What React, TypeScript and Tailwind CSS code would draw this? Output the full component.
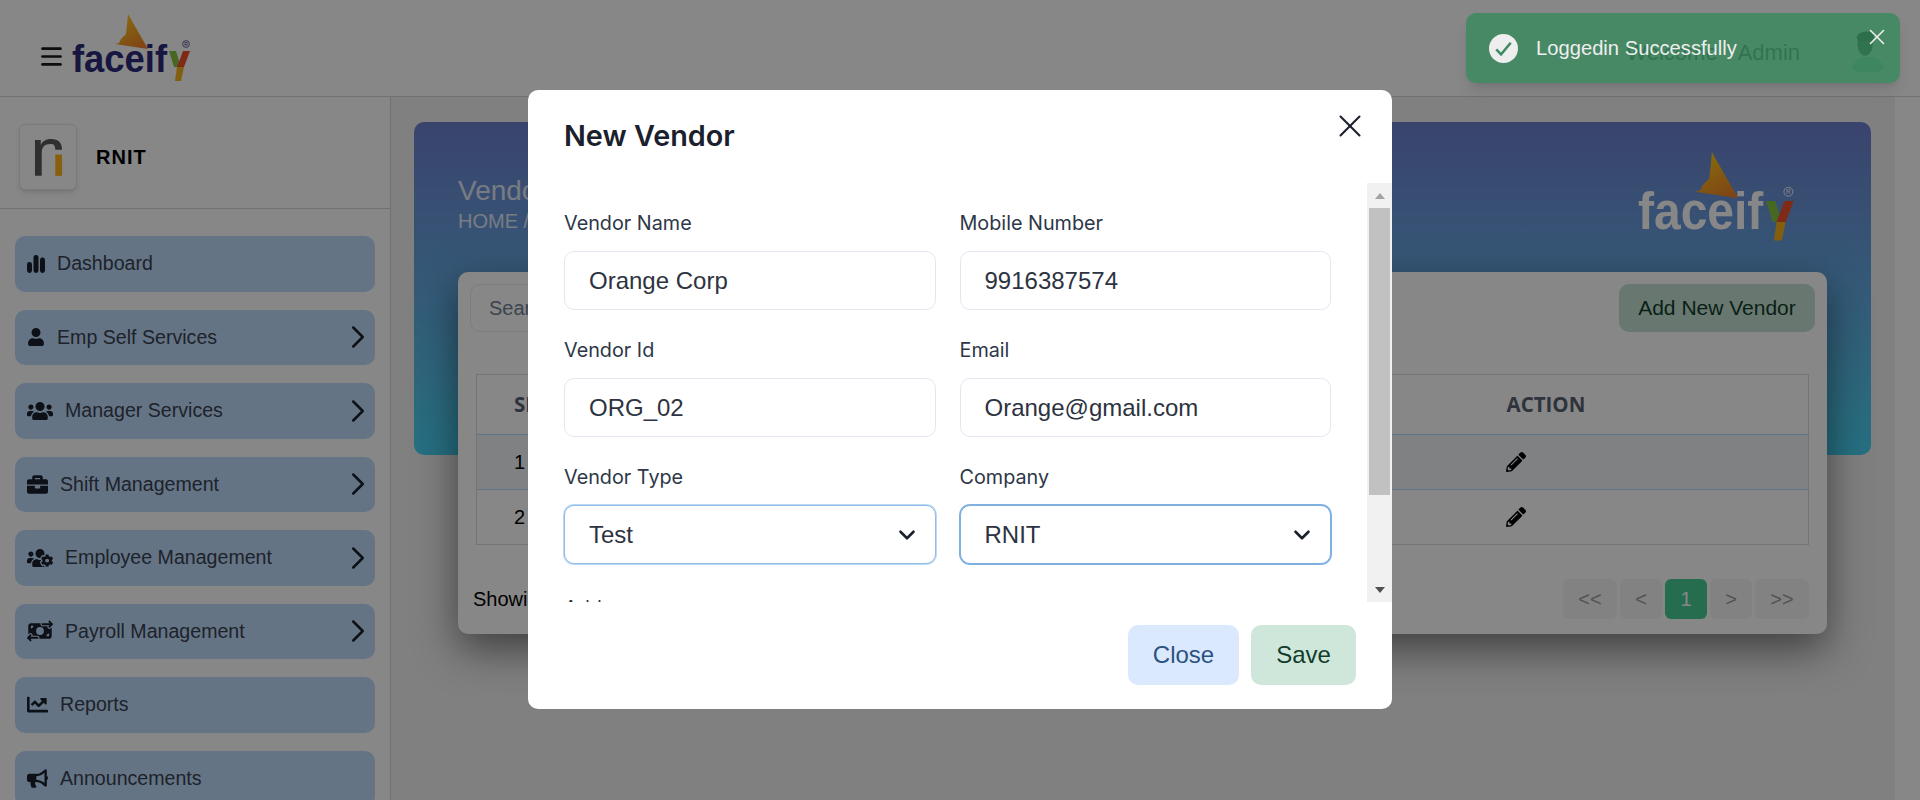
import React from "react";
import { ChevronDown, ChevronRight, Menu, X } from "lucide-react";
import {
  FaBriefcase,
  FaBullhorn,
  FaChartLine,
  FaPencilAlt,
  FaUser,
  FaUsers,
  FaUsersCog,
} from "react-icons/fa";
import { FaMoneyBillTransfer } from "react-icons/fa6";

const sans = "font-['Liberation_Sans',Arial,sans-serif]";
const inter = "font-['Inter',sans-serif]";

const BarsIcon = () => (
  <svg viewBox="0 0 18 18" className="w-[18px] h-[18px]" fill="currentColor">
    <rect x="0" y="7" width="5" height="11" rx="2.4" />
    <rect x="6.5" y="0" width="5" height="18" rx="2.4" />
    <rect x="13" y="2.5" width="5" height="15.5" rx="2.4" />
  </svg>
);

const Logo = ({ className, textColor }: { className: string; textColor: string }) => (
  <svg viewBox="0 0 119 68" className={className}>
    <defs>
      <linearGradient id="flag" x1="0.3" y1="0" x2="0.8" y2="1">
        <stop offset="0" stopColor="#ffcc1a" />
        <stop offset="1" stopColor="#f0802a" />
      </linearGradient>
    </defs>
    <polygon points="56,0 76,35 43,30 47,29 49,25 54,20 55,11" fill="url(#flag)" />
    <text
      x="0"
      y="58"
      fontFamily="Liberation Sans, Arial, sans-serif"
      fontWeight="700"
      fontSize="39"
      textLength="95"
      lengthAdjust="spacingAndGlyphs"
      fill={textColor}
    >
      faceif
    </text>
    <polygon points="97,37 104,37 109,53 102,53" fill="#86c440" />
    <polygon points="111,37 118,37 112,53 105,53" fill="#f0502a" />
    <polygon points="105,53 112,53 109,67 103,67" fill="#f7b21c" />
    <circle cx="114" cy="30" r="3.4" fill="none" stroke={textColor} strokeWidth="0.7" />
    <text x="114" y="32" fontSize="5" textAnchor="middle" fill={textColor} fontFamily="Liberation Sans, sans-serif">
      R
    </text>
  </svg>
);

const menu = [
  { label: "Dashboard", icon: <BarsIcon />, arrow: false },
  { label: "Emp Self Services", icon: <FaUser size={18} />, arrow: true },
  { label: "Manager Services", icon: <FaUsers size={26} />, arrow: true },
  { label: "Shift Management", icon: <FaBriefcase size={21} />, arrow: true },
  { label: "Employee Management", icon: <FaUsersCog size={26} />, arrow: true },
  { label: "Payroll Management", icon: <FaMoneyBillTransfer size={26} />, arrow: true },
  { label: "Reports", icon: <FaChartLine size={21} />, arrow: false },
  { label: "Announcements", icon: <FaBullhorn size={21} />, arrow: false },
];

const labelCls = `block h-[28px] mb-[14px] leading-[28px] text-[19.8px] text-[#2d3748] ${inter}`;

const Field = ({ label, value }: { label: string; value: string }) => (
  <div className="pb-[26px]">
    <label className={labelCls}>{label}</label>
    <input
      readOnly
      value={value}
      className={`w-full h-[59px] px-[24px] rounded-[10px] border border-[#e2e8f0] bg-white text-[24px] text-[#2d3340] outline-none ${sans}`}
    />
  </div>
);

const SelectField = ({ label, value, focus }: { label: string; value: string; focus: string }) => (
  <div className="pb-[26px]">
    <label className={labelCls}>{label}</label>
    <div className="relative">
      <select
        defaultValue={value}
        className={`w-full h-[59px] px-[24px] rounded-[10px] border bg-white text-[24px] text-[#2d3340] outline-none appearance-none ${focus} ${sans}`}
      >
        <option>{value}</option>
      </select>
      <ChevronDown size={26} strokeWidth={2.4} className="absolute right-[16px] top-[17px] text-[#1a202c]" />
    </div>
  </div>
);

const App = () => {
  return (
    <div className={`relative h-[800px] overflow-hidden bg-white flex flex-col ${sans}`}>
      <header className="h-[97px] shrink-0 flex items-center pl-[38px] border-b border-[#d6d6d6] bg-white">
        <Menu size={27} strokeWidth={2.4} className="mt-[17px] text-[#1a1a1a]" />
        <Logo className="w-[119px] h-[68px] ml-[7px]" textColor="#2a2a7a" />
        <div className="ml-auto mr-[28px] flex items-center text-[22px] text-[#2d3748]">
          <span className="mt-[8px]">Welcome</span>
          <span className="ml-[20px] mt-[8px]">Admin</span>
          <svg viewBox="0 0 50 50" className="w-[48px] h-[48px] ml-[44px]">
            <circle cx="25" cy="25" r="24" fill="#ffffff" />
            <path d="M8 46c3-9 10-12 17-12s14 3 17 12a24 24 0 0 1-34 0z" fill="#a8e0d0" />
            <ellipse cx="22" cy="21" rx="8" ry="12" fill="#333333" />
            <path d="M13 14c2-7 15-8 19-3l-2 6-15 1z" fill="#111111" />
          </svg>
        </div>
      </header>

      <div className="flex-1 flex min-h-0">
        <aside className="w-[391px] shrink-0 border-r border-[#d6d6d6] bg-white">
          <div className="h-[112px] flex items-center pl-[19px] pt-[8px] border-b border-[#d6d6d6]">
            <div className="w-[58px] h-[66px] flex items-center justify-center rounded-[6px] border border-[#e6e6e6] bg-white shadow-md">
              <svg viewBox="0 0 30 40" className="w-[29px] h-[39px]">
                <path d="M1 40V3h6v5c2-4 6-6 11-6 7 0 11 4 11 11h-7c0-4-1-6-5-6-6 0-9 3-9 9v24z" fill="#5a5a5a" />
                <rect x="22" y="18" width="7" height="22" fill="#ffb31a" />
              </svg>
            </div>
            <span className="ml-[19px] text-[20px] font-bold tracking-[1px] text-black">RNIT</span>
          </div>
          <nav className="px-[15px] pt-[27px] flex flex-col gap-[18px]">
            {menu.map((m) => (
              <div
                key={m.label}
                className="h-[55.5px] shrink-0 flex items-center pl-[12px] rounded-[10px] bg-[#bddcfc] text-[#3a4150]"
              >
                <span className="text-[#1a202c]">{m.icon}</span>
                <span className="ml-[12px] text-[19.6px]">{m.label}</span>
                {m.arrow && <ChevronRight size={38} strokeWidth={1.6} className="ml-auto mr-[-2px] text-[#1a202c]" />}
              </div>
            ))}
          </nav>
        </aside>

        <main className="flex-1 bg-[#f1f1f1] pl-[23px] pr-[24px] pt-[25px]">
          <section className="h-[333px] rounded-[10px] bg-gradient-to-b from-[#6d80cf] to-[#46d4f5] pl-[44px] pt-[51px] pr-[76px] flex justify-between">
            <div className="text-white/80">
              <div className="text-[28px] leading-[36px]">Vendors</div>
              <div className="text-[20px] leading-[24px]">HOME / VENDORS</div>
            </div>
            <Logo className="w-[157px] h-[90px] mt-[-21px]" textColor="#ffffff" />
          </section>

          <section className="relative mt-[-183px] mx-[44px] h-[362px] rounded-[10px] bg-white p-[12px] shadow-[0_15px_40px_rgba(0,0,0,0.5)]">
            <div className="flex items-center h-[48px]">
              <input
                readOnly
                placeholder="Search"
                className="w-[300px] h-[48px] px-[18px] rounded-[10px] border border-[#e2e8f0] text-[20px] outline-none placeholder:text-[#718096]"
              />
              <button className="ml-auto w-[196px] h-[48px] rounded-[10px] bg-[#c5e2d4] text-[21px] text-[#123d2a]">
                Add New Vendor
              </button>
            </div>
            <div className="mx-[6px] mt-[42px]">
              <table className="w-full table-fixed border border-[#dcdcdc] border-collapse text-[20px] text-black">
                <thead>
                  <tr className="h-[60px] text-left text-[20.5px] font-bold text-[#5a6170] font-['Open_Sans',sans-serif]">
                    <th className="pl-[37px] w-[200px]">SI.NO</th>
                    <th className="w-[300px]">VENDOR NAME</th>
                    <th className="w-[530px]">MOBILE NUMBER</th>
                    <th>ACTION</th>
                  </tr>
                </thead>
                <tbody>
                  <tr className="h-[55px] border-t border-[#b5dcff] bg-[#f2f4f8]">
                    <td className="pl-[37px]">1</td>
                    <td>Orange Corp</td>
                    <td>9916387574</td>
                    <td>
                      <FaPencilAlt size={20} className="ml-[-1px] text-black" />
                    </td>
                  </tr>
                  <tr className="h-[55px] border-t border-[#b5dcff]">
                    <td className="pl-[37px]">2</td>
                    <td>Test Vendor</td>
                    <td>9876543210</td>
                    <td>
                      <FaPencilAlt size={20} className="ml-[-1px] text-black" />
                    </td>
                  </tr>
                </tbody>
              </table>
            </div>
            <div className="mt-[34px] ml-[3px] mr-[6px] flex items-center justify-between">
              <span className="text-[20px] text-black">Showing 1 to 2 of 2</span>
              <div className="flex gap-[3px] text-[20px] text-[#9e9e9e]">
                <button className="w-[54px] h-[40px] rounded-[6px] bg-[#f6f6f6]">&lt;&lt;</button>
                <button className="w-[42px] h-[40px] rounded-[6px] bg-[#f6f6f6]">&lt;</button>
                <button className="w-[42px] h-[40px] rounded-[6px] bg-[#46cf94] text-white">1</button>
                <button className="w-[42px] h-[40px] rounded-[6px] bg-[#f6f6f6]">&gt;</button>
                <button className="w-[54px] h-[40px] rounded-[6px] bg-[#f6f6f6]">&gt;&gt;</button>
              </div>
            </div>
          </section>
        </main>

        <div className="w-[25px] shrink-0 bg-white" />
      </div>

      {/* backdrop */}
      <div className="absolute inset-0 bg-black/[0.47]" />

      {/* modal */}
      <div className="absolute left-[528px] top-[90px] w-[864px] h-[619px] rounded-[10px] bg-white flex flex-col">
        <div className="h-[93px] shrink-0 relative pl-[36px] pt-[26px]">
          <h2 className={`text-[28.8px] leading-[40px] font-semibold text-[#1a202c] ${inter}`}>New Vendor</h2>
          <X size={38} strokeWidth={1.3} className="absolute right-[23px] top-[17px] text-[#1a202c]" />
        </div>
        <div className="h-[419px] shrink-0 flex">
          <div className="flex-1 overflow-hidden pl-[36px] pr-[36px] pt-[26px]">
            <div className="grid grid-cols-2 gap-x-[24px]">
              <Field label="Vendor Name" value="Orange Corp" />
              <Field label="Mobile Number" value="9916387574" />
              <Field label="Vendor Id" value="ORG_02" />
              <Field label="Email" value="Orange@gmail.com" />
              <SelectField label="Vendor Type" value="Test" focus="border-[#90bde8] ring-1 ring-[#bcd8f2]" />
              <SelectField label="Company" value="RNIT" focus="border-[#7fb0e0] ring-1 ring-[#7fb0e0]" />
              <div className="mt-[4px]">
                <Field label="Address" value="" />
              </div>
            </div>
          </div>
          <div className="w-[25px] shrink-0 bg-[#f1f1f1] flex flex-col">
            <div className="h-[25px] shrink-0 flex items-center justify-center">
              <div className="w-0 h-0 border-x-[5.5px] border-x-transparent border-b-[6px] border-b-[#a3a3a3]" />
            </div>
            <div className="h-[287px] mx-[2px] bg-[#c1c1c1]" />
            <div className="mt-auto h-[25px] shrink-0 flex items-center justify-center">
              <div className="w-0 h-0 border-x-[5.5px] border-x-transparent border-t-[6px] border-t-[#505050]" />
            </div>
          </div>
        </div>
        <div className="flex-1 flex justify-end items-start gap-[12px] pt-[23px] pr-[36px] text-[24px]">
          <button className="w-[111px] h-[60px] rounded-[10px] bg-[#dbe9fe] text-[#2c5282]">Close</button>
          <button className="w-[105px] h-[60px] rounded-[10px] bg-[#cfe6da] text-[#123d2a]">Save</button>
        </div>
      </div>

      {/* toast */}
      <div className="absolute left-[1466px] top-[13px] w-[434px] h-[70px] rounded-[10px] bg-[#378a5d]/80 shadow-lg flex items-center pl-[23px] text-[20.2px] text-[#eeeeee]">
        <svg viewBox="0 0 30 30" className="w-[29px] h-[29px]">
          <circle cx="15" cy="15" r="15" fill="#eeeeee" />
          <path d="M7.5 16l5 5 10-12" fill="none" stroke="#3f8a63" strokeWidth="2.6" />
        </svg>
        <span className="ml-[18px]">Loggedin Successfully</span>
        <X size={26} strokeWidth={1.5} className="absolute right-[10px] top-[11px] text-[#eeeeee]" />
      </div>
    </div>
  );
};

export default App;
